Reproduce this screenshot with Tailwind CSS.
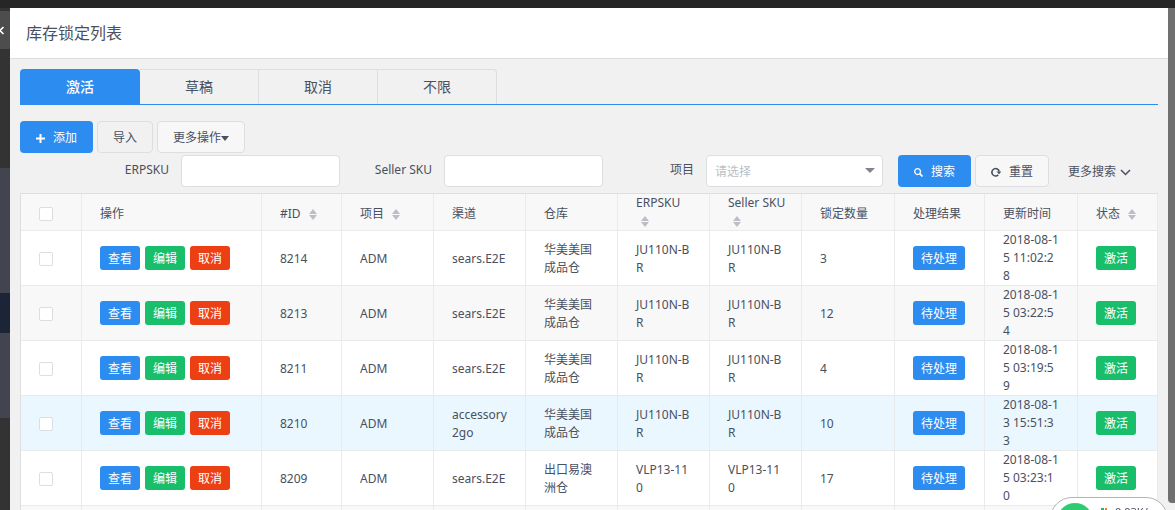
<!DOCTYPE html>
<html lang="zh-CN">
<head>
  <meta charset="UTF-8">
  <meta name="viewport" content="width=device-width, initial-scale=1.0">
  <title>库存锁定列表</title>
  <script src="https://cdn.jsdelivr.net/npm/@tailwindcss/browser@4"></script>
</head>
<body class="h-screen overflow-hidden flex flex-col bg-[#333333] font-['Noto_Sans','Noto_Sans_CJK_SC',sans-serif] text-xs leading-[18px] text-[#495060]">
  <!-- Top bar -->
  <div class="h-2 shrink-0 bg-[#262626]"></div>

  <div class="flex flex-1 min-h-0">
    <!-- Collapsed sidebar -->
    <aside class="w-[10px] shrink-0 flex flex-col overflow-hidden">
      <button type="button" aria-label="收起" class="mt-[3px] h-[38px] shrink-0 bg-[#4d4d4d] text-white">
        <svg class="w-[10px] h-[38px]" viewBox="0 0 10 38" fill="none" stroke="currentColor" stroke-width="1.6"><path d="M3.5 16 L0 19.5 L3.5 23"/></svg>
      </button>
      <div class="h-[119px] shrink-0"></div>
      <div class="h-[125px] shrink-0 bg-[#42454f]"></div>
      <div class="h-10 shrink-0 bg-[#1c2438]"></div>
      <div class="h-[85px] shrink-0 bg-[#42454f]"></div>
    </aside>

    <!-- Drawer -->
    <div class="flex-1 min-w-0 overflow-hidden bg-[#f1f1f1]">
      <header class="bg-white border-b border-[#dddee1] px-4 h-[51px] flex items-center">
        <h1 class="text-base">库存锁定列表</h1>
      </header>

      <main class="px-[10px] pt-[10px]">
        <!-- Tabs -->
        <nav class="flex h-9 border-b border-[#2d8cf0] text-sm">
          <button type="button" class="w-[120px] rounded-t bg-[#2d8cf0] font-medium text-white">激活</button>
          <button type="button" class="w-[119px] border-t border-r border-[#dddee1]">草稿</button>
          <button type="button" class="w-[119px] border-t border-r border-[#dddee1]">取消</button>
          <button type="button" class="w-[119px] rounded-tr border-t border-r border-[#dddee1]">不限</button>
        </nav>

        <!-- Actions -->
        <div class="mt-4 flex gap-1">
          <button type="button" class="flex h-8 items-center gap-2 rounded bg-[#2d8cf0] px-4 pt-[2px] text-white">
            <svg class="size-[9px]" viewBox="0 0 9 9" stroke="currentColor" stroke-width="2"><path d="M4.5 0v9M0 4.5h9"/></svg>
            添加
          </button>
          <button type="button" class="h-8 rounded border border-[#dddee1] px-[15px] pt-[2px]">导入</button>
          <button type="button" class="flex h-8 items-center rounded border border-[#dddee1] bg-[#f7f7f7] px-[15px] pt-[2px]">
            更多操作
            <svg class="w-2 h-[5px]" viewBox="0 0 8 5" fill="currentColor"><path d="M0 0h8L4 5z"/></svg>
          </button>
        </div>

        <!-- Search form -->
        <form class="mt-[2px] mb-[6px] grid grid-cols-[320fr_263fr_280fr_275fr]">
          <div class="flex justify-end gap-3">
            <label for="erpsku" class="pt-[6px]">ERPSKU</label>
            <input id="erpsku" type="text" class="h-8 w-[159px] rounded border border-[#dddee1] bg-white px-2">
          </div>
          <div class="flex justify-end gap-3">
            <label for="sellersku" class="pt-[6px]">Seller SKU</label>
            <input id="sellersku" type="text" class="h-8 w-[159px] rounded border border-[#dddee1] bg-white px-2">
          </div>
          <div class="flex justify-end gap-3">
            <label for="project" class="pt-[6px]">项目</label>
            <div class="relative">
              <select id="project" class="h-8 w-[177px] appearance-none rounded border border-[#dddee1] bg-white px-2 pt-[2px] text-[#bbbec4]">
                <option>请选择</option>
              </select>
              <svg class="pointer-events-none absolute right-2 top-[13px] w-[10px] h-[5px] text-[#80848f]" viewBox="0 0 10 5" fill="currentColor"><path d="M0 0h10L5 5z"/></svg>
            </div>
          </div>
          <div class="flex items-center gap-1 pl-[15px]">
            <button type="button" class="flex h-8 items-center gap-2 rounded bg-[#2d8cf0] px-4 pt-[2px] text-white">
              <svg class="size-[9px]" viewBox="0 0 9 9" fill="none" stroke="currentColor" stroke-width="1.3"><circle cx="3.6" cy="3.6" r="2.9"/><path d="M5.7 5.7 8.5 8.5" stroke-width="1.7"/></svg>
              搜索
            </button>
            <button type="reset" class="flex h-8 items-center gap-2 rounded border border-[#dddee1] bg-[#f7f7f7] px-[15px] pt-[2px]">
              <svg class="size-[10px]" viewBox="0 0 10 10" fill="none" stroke="currentColor" stroke-width="1.6"><path d="M8.2 4.5A3.7 3.7 0 1 0 7.2 7.900"/><path d="M5.500 4.500H10.500L8 7.200z" fill="currentColor" stroke="none"/></svg>
              重置
            </button>
            <a href="#" class="ml-[15px] flex items-center gap-1 pt-[2px]">
              更多搜索
              <svg class="w-[11px] h-[7px]" viewBox="0 0 11 7" fill="none" stroke="currentColor" stroke-width="1.5"><path d="M1 1l4.5 4.5L10 1"/></svg>
            </a>
          </div>
        </form>

        <!-- Table -->
        <table class="w-full table-fixed border-separate border-spacing-0 border-l border-t border-[#dddee1] text-left">
          <colgroup>
            <col class="w-[61px]"><col class="w-[180px]"><col class="w-[80px]"><col class="w-[92px]"><col class="w-[92px]"><col class="w-[92px]">
            <col class="w-[92px]"><col class="w-[92px]"><col class="w-[93px]"><col class="w-[90px]"><col class="w-[93px]"><col class="w-[80px]">
          </colgroup>
          <thead id="head"></thead>
          <tbody id="rows"></tbody>
        </table>
      </main>
    </div>

    <!-- Scrollbar -->
    <div class="w-[7px] shrink-0 bg-[#f1f1f1]">
      <div class="h-[calc(100%-7px)] rounded-bl bg-[#707070]"></div>
    </div>
  </div>

  <!-- Network monitor -->
  <div class="fixed left-[calc(100%-125px)] top-[calc(100%-13px)] flex h-11 w-[118px] rounded-full border border-[#b4b4b4] bg-white">
    <div class="mt-[5px] ml-[6px] size-9 rounded-full bg-[#2ecc71]"></div>
    <div class="mt-[6px] ml-2 flex gap-[6px] text-[11px] leading-4">
      <svg class="mt-1 w-2 h-3" viewBox="0 0 8 12"><path d="M0 0h3v7H0z" fill="#19be6b"/><path d="M4 0h2v7H4z" fill="#f08030"/></svg>
      0.03K/s
    </div>
  </div>

  <script>
    const sortIcon = `<svg class="ml-[5px] inline-block w-2 h-[11px] align-middle text-[#bbbec4]" viewBox="0 0 8 11" fill="currentColor"><path d="M0 5L4 0l4 5zM0 6h8l-4 5z"/></svg>`;
    const cell = "border-r border-b border-[#e9eaec] px-[18px] break-all";
    const textCell = cell + " pt-[2px]";
    const checkbox = (label) => `<input type="checkbox" aria-label="${label}" class="block size-[14px] appearance-none rounded-[2px] border border-[#dddee1] bg-white">`;

    const columns = [
      ["操作"], ["#ID", true], ["项目", true], ["渠道"], ["仓库"], ["ERPSKU", true],
      ["Seller SKU", true], ["锁定数量"], ["处理结果"], ["更新时间"], ["状态", true],
    ];
    // SKU headings take two lines, so they get no top padding
    document.getElementById("head").innerHTML = `<tr class="h-[37px] bg-[#f8f8f9]"><th class="${cell} pt-[3px]">${checkbox("全选")}</th>` +
      columns.map(([name, sort]) => `<th class="${name.endsWith("SKU") ? cell : cell + " pt-[3px]"} font-normal"><span class="whitespace-nowrap">${name}</span>${sort ? " " + sortIcon : ""}</th>`).join("") + "</tr>";

    const rows = [
      ["8214", "ADM", "sears.E2E", "华美美国成品仓", "JU110N-BR", "3", "2018-08-15 11:02:28"],
      ["8213", "ADM", "sears.E2E", "华美美国成品仓", "JU110N-BR", "12", "2018-08-15 03:22:54"],
      ["8211", "ADM", "sears.E2E", "华美美国成品仓", "JU110N-BR", "4", "2018-08-15 03:19:59"],
      ["8210", "ADM", "accessory2go", "华美美国成品仓", "JU110N-BR", "10", "2018-08-13 15:51:33"],
      ["8209", "ADM", "sears.E2E", "出口易澳洲仓", "VLP13-110", "17", "2018-08-15 03:23:10"],
    ];
    const btn = "h-6 rounded-[3px] px-2 pt-px text-white";
    document.getElementById("rows").innerHTML = rows.map(([id, project, channel, store, sku, count, time], i) => {
      const bg = id === "8210" ? "bg-[#ebf7ff]" : i % 2 ? "bg-[#f8f8f9]" : "bg-white";
      return `<tr class="h-[55px] ${bg}">
        <td class="${textCell}">${checkbox(id)}</td>
        <td class="${cell}"><div class="flex gap-[5px]">
          <button type="button" class="${btn} bg-[#2d8cf0]">查看</button>
          <button type="button" class="${btn} bg-[#19be6b]">编辑</button>
          <button type="button" class="${btn} bg-[#ed3f14]">取消</button>
        </div></td>
        <td class="${textCell}">${id}</td>
        <td class="${textCell}">${project}</td>
        <td class="${textCell}">${channel}</td>
        <td class="${textCell}">${store}</td>
        <td class="${textCell}">${sku}</td>
        <td class="${textCell}">${sku}</td>
        <td class="${textCell}">${count}</td>
        <td class="${cell}"><button type="button" class="${btn} bg-[#2d8cf0]">待处理</button></td>
        <td class="${cell}">${time}</td>
        <td class="${cell}"><button type="button" class="${btn} bg-[#19be6b]">激活</button></td>
      </tr>`;
    }).join("") + `<tr class="h-[55px] bg-[#f8f8f9]">${`<td class="${cell}"></td>`.repeat(12)}</tr>`;
  </script>
</body>
</html>
